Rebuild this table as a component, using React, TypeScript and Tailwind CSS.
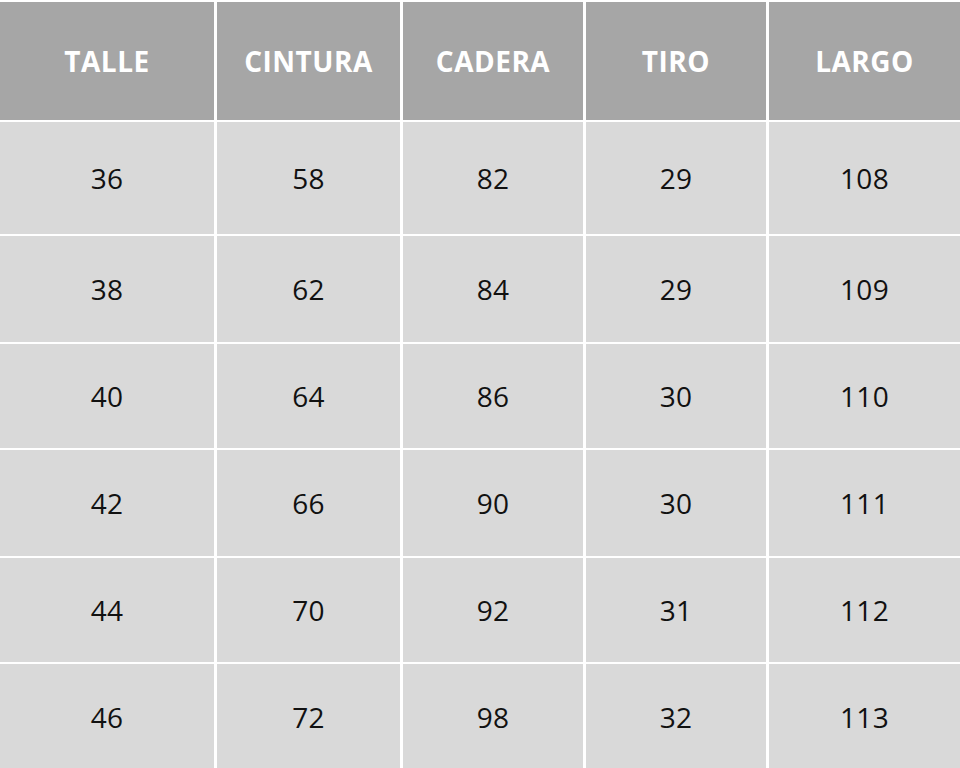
import React from "react";

const headers = ["TALLE", "CINTURA", "CADERA", "TIRO", "LARGO"];
const rows = [
  ["36", "58", "82", "29", "108"],
  ["38", "62", "84", "29", "109"],
  ["40", "64", "86", "30", "110"],
  ["42", "66", "90", "30", "111"],
  ["44", "70", "92", "31", "112"],
  ["46", "72", "98", "32", "113"],
];
const heights = ["h-[112px]", "h-[106px]", "h-[104px]", "h-[106px]", "h-[104px]", "h-[106px]"];

export default function App() {
  return (
    <div
      className="w-[960px] h-[768px] overflow-hidden bg-white pt-[2px]"
      style={{ fontFamily: '"Open Sans", sans-serif' }}
    >
      <div className="grid grid-cols-[214px_183px_180px_180px_191px] gap-x-[3px] gap-y-[2px]">
        {headers.map((h) => (
          <div
            key={h}
            className="h-[118px] bg-[#a6a6a6] flex items-center justify-center text-white font-bold text-[28px] tracking-[0.5px]"
          >
            {h}
          </div>
        ))}
        {rows.map((r, i) =>
          r.map((c, j) => (
            <div
              key={`${i}-${j}`}
              className={`${heights[i]} bg-[#d9d9d9] flex items-center justify-center text-[#111] text-[28px] tracking-[0.3px]`}
            >
              {c}
            </div>
          ))
        )}
      </div>
    </div>
  );
}
